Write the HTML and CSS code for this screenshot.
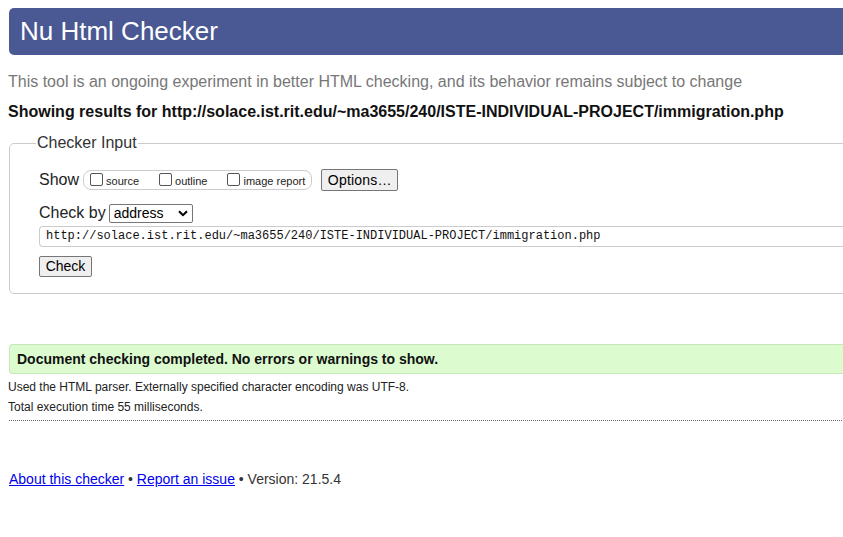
FILE: index.html
```html
<!DOCTYPE html>
<html>
<head>
<meta charset="utf-8">
<title>Nu Html Checker</title>
<link rel="stylesheet" href="styles.css">
</head>
<body>
<div class="page">
  <h1 class="header">Nu Html Checker</h1>
  <p class="intro">This tool is an ongoing experiment in better HTML checking, and its behavior remains subject to change</p>
  <p class="showing">Showing results for http://solace.ist.rit.edu/~ma3655/240/ISTE-INDIVIDUAL-PROJECT/immigration.php</p>
  <fieldset class="checker">
    <legend class="legend">Checker Input</legend>
    <div class="row show-row">
      <span class="label">Show</span>
      <span class="group">
        <label class="opt"><span class="cb"></span>source</label>
        <label class="opt"><span class="cb"></span>outline</label>
        <label class="opt"><span class="cb"></span>image report</label>
      </span>
      <span class="btn options">Options…</span>
    </div>
    <div class="row check-row">
      <span class="label">Check by</span>
      <span class="select">address<svg class="chev" width="10" height="7" viewBox="0 0 10 7"><path d="M1 1.2 L5 5.2 L9 1.2" fill="none" stroke="#000" stroke-width="2"/></svg></span>
    </div>
    <div class="url">http://solace.ist.rit.edu/~ma3655/240/ISTE-INDIVIDUAL-PROJECT/immigration.php</div>
    <div class="row"><span class="btn check">Check</span></div>
  </fieldset>
  <div class="success">Document checking completed. No errors or warnings to show.</div>
  <p class="detail">Used the HTML parser. Externally specified character encoding was UTF-8.</p>
  <p class="detail">Total execution time 55 milliseconds.</p>
  <div class="dotted"></div>
  <p class="footer"><a href="#">About this checker</a> • <a href="#">Report an issue</a> • Version: 21.5.4</p>
</div>
</body>
</html>
```
FILE: styles.css
```css
html, body {
  margin: 0;
  padding: 0;
  overflow: hidden;
  background: #fff;
}
body {
  font-family: "Liberation Sans", Arial, sans-serif;
  color: #222;
}
.page {
  width: 900px;
  padding: 8px 0 0 8px;
}
.header {
  margin: 0 0 0 1px;
  height: 47px;
  background: #4a5893;
  color: #fff;
  font-weight: normal;
  font-size: 26px;
  line-height: 47px;
  padding-left: 11px;
  border-radius: 5px 0 0 5px;
}
.intro {
  margin: 18px 0 0 0;
  font-size: 16px;
  line-height: 18px;
  color: #777;
}
.showing {
  margin: 12px 0 0 0;
  font-size: 16px;
  line-height: 18px;
  font-weight: bold;
  color: #111;
}
.checker {
  margin: 13px 0 0 1px;
  padding: 0 0 16px 29px;
  border: 1px solid #ccc;
  border-radius: 5px;
  width: 860px;
}
.legend {
  font-size: 16px;
  color: #333;
  padding: 0 1px;
  margin-left: -3px;
}
.row {
  display: flex;
  align-items: center;
}
.label {
  font-size: 16px;
  color: #222;
}
.show-row {
  margin-top: 17px;
  height: 22px;
}
.group {
  display: flex;
  align-items: center;
  margin-left: 4px;
  height: 18px;
  border: 1px solid #ccc;
  border-radius: 8px;
  padding: 0 6px 0 6px;
  gap: 20px;
}
.opt {
  display: flex;
  align-items: center;
  font-size: 11px;
  color: #222;
  margin-top: 1px;
}
.cb {
  width: 11px;
  height: 11px;
  border: 1px solid #555;
  border-radius: 2px;
  margin-right: 3px;
  background: #fff;
  margin-top: -3px;
}
.btn {
  display: inline-block;
  background: #efefef;
  border: 1px solid #767676;
  border-radius: 2px;
  color: #000;
  box-sizing: border-box;
}
.options {
  margin-left: 9px;
  width: 77px;
  height: 22px;
  line-height: 20px;
  font-size: 14px;
  text-align: center;
  letter-spacing: 0.2px;
}
.check-row {
  margin-top: 12px;
  height: 20px;
}
.select {
  display: flex;
  align-items: center;
  justify-content: space-between;
  box-sizing: border-box;
  margin-left: 3px;
  width: 84px;
  height: 19px;
  border: 1px solid #767676;
  border-radius: 2px;
  font-size: 14px;
  padding: 0 4px 0 4px;
  color: #000;
}
.chev {
  display: block;
}
.url {
  margin-top: 3px;
  box-sizing: border-box;
  height: 21px;
  border: 1px solid #ccc;
  border-right: none;
  border-radius: 4px 0 0 4px;
  font-family: "Liberation Mono", "DejaVu Sans Mono", monospace;
  font-size: 12px;
  line-height: 19px;
  padding-left: 6px;
  color: #111;
}
.check {
  margin-top: 9px;
  width: 53px;
  height: 21px;
  font-size: 14px;
  line-height: 19px;
  text-align: center;
}
.success {
  margin: 50px 0 0 1px;
  height: 30px;
  box-sizing: border-box;
  background: #dcfcd0;
  border: 1px solid #c6e6bb;
  border-right: none;
  border-radius: 4px 0 0 4px;
  font-size: 14px;
  font-weight: bold;
  line-height: 28px;
  padding-left: 7px;
  color: #111;
}
.detail {
  margin: 0;
  font-size: 12px;
  line-height: 20px;
  color: #222;
}
.success + .detail {
  margin-top: 3px;
}
.dotted {
  margin: 3px 0 0 1px;
  border-top: 1px dotted #666;
}
.footer {
  margin: 49px 0 0 1px;
  font-size: 14px;
  line-height: 18px;
  color: #333;
}
.footer a {
  color: #00e;
}
```
